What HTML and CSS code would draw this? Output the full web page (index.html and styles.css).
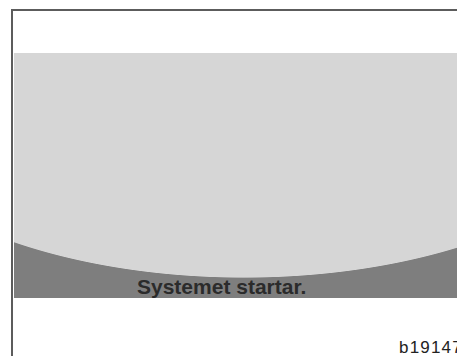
FILE: index.html
```html
<!DOCTYPE html>
<html lang="sv">
<head>
<meta charset="UTF-8" />
<meta name="viewport" content="width=device-width, initial-scale=1.0" />
<title>Systemet startar</title>
<link rel="stylesheet" href="styles.css">
</head>
<body>
<div class="frame">
<div class="screen">
<span class="screen-text">Systemet startar.</span>
</div>
<div class="figure-code">b19147</div>
</div>
</body>
</html>
```

FILE: styles.css
```css
body {
margin: 0;
overflow: hidden;
background: #ffffff;
font-family: 'Liberation Sans', Arial, sans-serif;
}

.frame {
margin: 9px 0 0 11px;
width: calc(100vw - 11px);
height: calc(100vh - 9px);
overflow: hidden;
border-top: 2px solid #5c5c5c;
border-left: 2px solid #5c5c5c;
padding: 42px 0 0 1px;
box-sizing: border-box;
}

.screen {
height: 245px;
display: flex;
align-items: flex-end;
padding-left: 123px;
background: radial-gradient(400px 194px at 230px 31px, #d6d6d6 99.6%, #7e7e7e 100%);
}

.screen-text {
font-size: 21px;
font-weight: bold;
line-height: 1;
color: #2b2b2b;
margin-bottom: 1px;
white-space: nowrap;
}

.figure-code {
margin: 41px 0 0 385px;
font-size: 17px;
letter-spacing: 1.2px;
line-height: 1;
color: #222;
white-space: nowrap;
}
```
